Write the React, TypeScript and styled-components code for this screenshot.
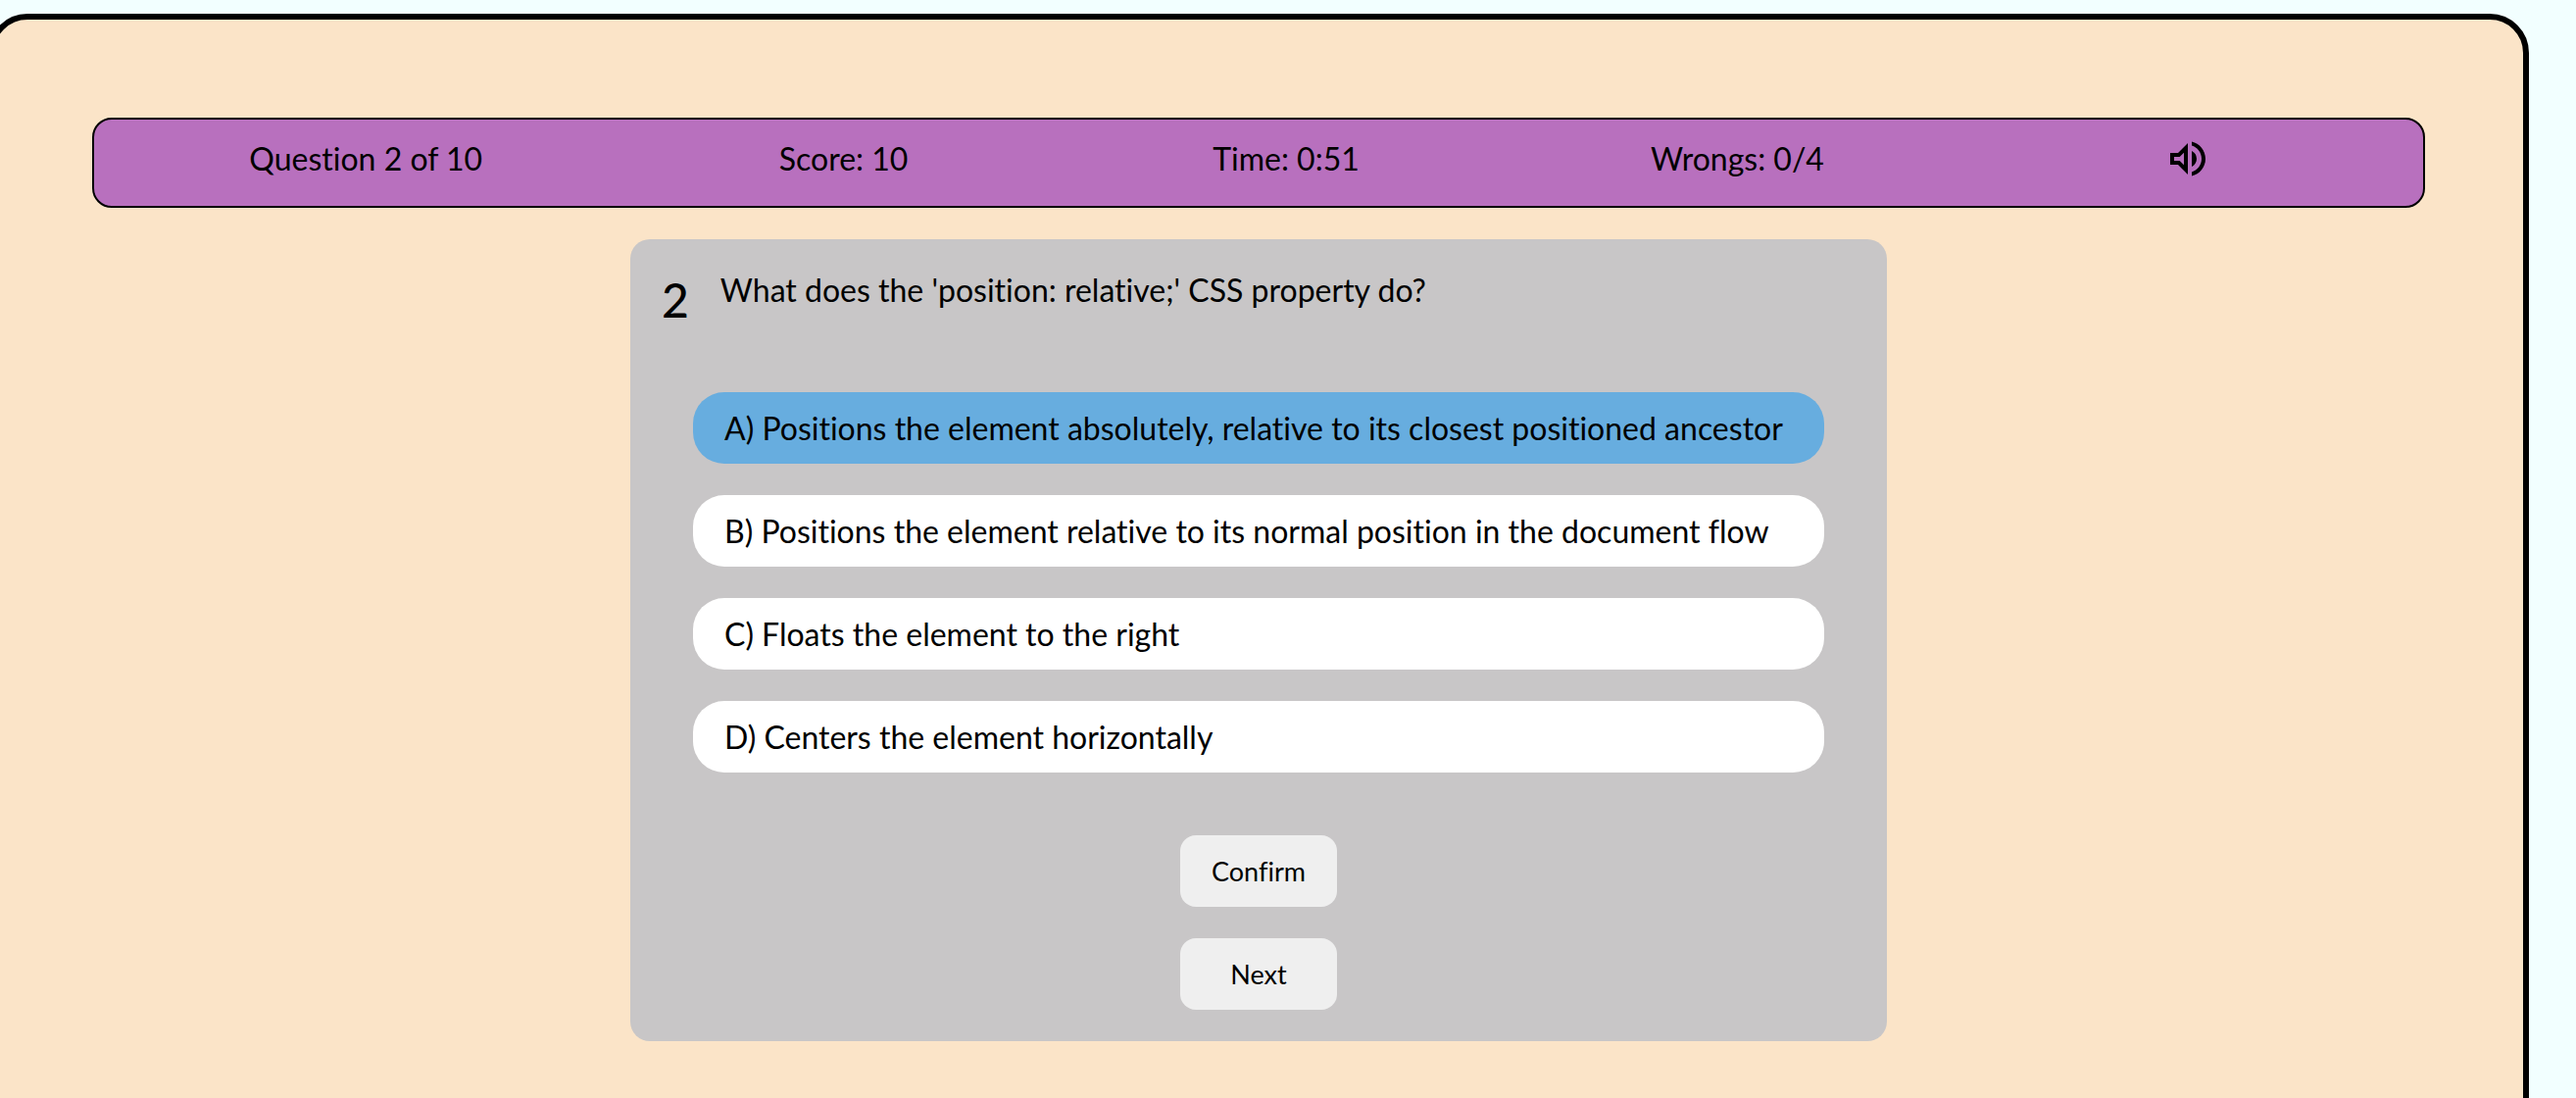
import React, { useState } from 'react';
import styled, { createGlobalStyle } from 'styled-components';

const GlobalStyle = createGlobalStyle`
  *, *::before, *::after { box-sizing: border-box; }
  body {
    margin: 0;
    background: #f2ffff;
    color: #000;
    font-family: Lato, 'Open Sans', sans-serif;
    font-size: 32px;
    line-height: 40px;
    font-variant-ligatures: none;
  }
`;

const Page = styled.div`
  height: 100vh;
  min-height: 1080px;
  padding: 14px 48px 0 0;
  overflow: hidden;
`;

const Frame = styled.main`
  display: flex;
  flex-direction: column;
  align-items: center;
  gap: 32px;
  min-height: 110vh;
  margin-left: -12px;
  padding: 100px;
  border: 6px solid #000;
  border-radius: 40px;
  background: #fbe4c8;
`;

const StatusBar = styled.header`
  display: grid;
  grid-template-columns: 277fr 210fr 241fr 219fr 240fr;
  justify-items: center;
  align-items: center;
  width: 100%;
  padding: 16px 0 24px;
  border: 2px solid #000;
  border-radius: 20px;
  background: #b870be;
`;

const Stat = styled.span`
  white-space: nowrap;
`;

const SoundButton = styled.button`
  display: flex;
  padding: 0;
  border: 0;
  background: none;
  color: inherit;
  cursor: pointer;
`;

const Card = styled.section`
  display: flex;
  flex-direction: column;
  gap: 64px;
  width: 100%;
  max-width: 1282px;
  padding: 32px;
  border-radius: 20px;
  background: #c8c6c7;
`;

const Question = styled.div`
  display: flex;
  gap: 32px;
  min-height: 60px;
`;

const QuestionNumber = styled.span`
  font-size: 48px;
  font-weight: 500;
  line-height: 60px;
`;

const QuestionText = styled.h1`
  margin: 0;
  font-size: inherit;
  font-weight: 400;
`;

const Options = styled.div`
  display: flex;
  flex-direction: column;
  gap: 32px;
  padding: 0 32px;
`;

const Option = styled.button<{ $selected: boolean }>`
  min-height: 73px;
  padding: 16px 32px;
  border: 0;
  border-radius: 32px;
  background: ${({ $selected }) => ($selected ? '#67addf' : '#fff')};
  color: inherit;
  font: inherit;
  text-align: left;
  cursor: pointer;
`;

const Actions = styled.div`
  display: flex;
  flex-direction: column;
  align-items: center;
  gap: 32px;
`;

const ActionButton = styled.button`
  width: 160px;
  min-height: 73px;
  padding: 16px 0;
  border: 0;
  border-radius: 16px;
  background: #efefef;
  color: inherit;
  font: inherit;
  font-size: 27px;
  cursor: pointer;
`;

const stats = ['Question 2 of 10', 'Score: 10', 'Time: 0:51', 'Wrongs: 0/4'];

const options = [
  'A) Positions the element absolutely, relative to its closest positioned ancestor',
  'B) Positions the element relative to its normal position in the document flow',
  'C) Floats the element to the right',
  'D) Centers the element horizontally',
];

function VolumeIcon() {
  return (
    <svg width="48" height="48" viewBox="0 0 24 24" fill="currentColor" aria-hidden="true">
      <path d="M3 9v6h4l5 5V4L7 9H3zm7-.17v6.34L7.83 13H5v-2h2.83L10 8.83zM16.5 12A4.5 4.5 0 0 0 14 7.97v8.05c1.48-.73 2.5-2.25 2.5-4.02zM14 3.23v2.06c2.89.86 5 3.54 5 6.71s-2.11 5.85-5 6.71v2.06c4.01-.91 7-4.49 7-8.77 0-4.28-2.99-7.86-7-8.77z" />
    </svg>
  );
}

export default function App() {
  const [selected, setSelected] = useState(0);

  return (
    <>
      <GlobalStyle />
      <Page>
        <Frame>
          <StatusBar>
            {stats.map((stat) => (
              <Stat key={stat}>{stat}</Stat>
            ))}
            <SoundButton type="button" aria-label="Sound">
              <VolumeIcon />
            </SoundButton>
          </StatusBar>
          <Card>
            <Question>
              <QuestionNumber>2</QuestionNumber>
              <QuestionText>What does the 'position: relative;' CSS property do?</QuestionText>
            </Question>
            <Options>
              {options.map((option, index) => (
                <Option
                  key={option}
                  type="button"
                  $selected={index === selected}
                  aria-pressed={index === selected}
                  onClick={() => setSelected(index)}
                >
                  {option}
                </Option>
              ))}
            </Options>
            <Actions>
              <ActionButton type="button">Confirm</ActionButton>
              <ActionButton type="button">Next</ActionButton>
            </Actions>
          </Card>
        </Frame>
      </Page>
    </>
  );
}
